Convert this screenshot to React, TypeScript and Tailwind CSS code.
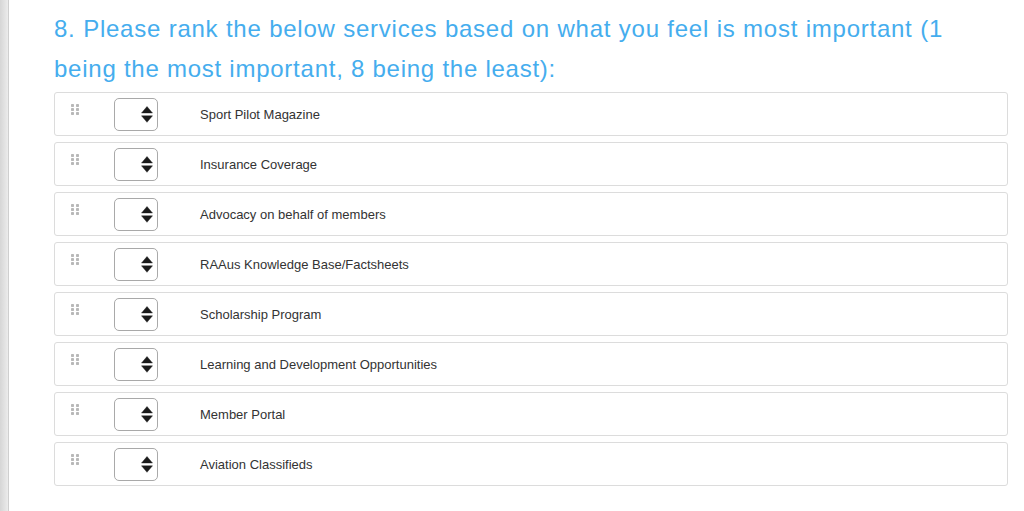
import React from "react";

const items = [
  "Sport Pilot Magazine",
  "Insurance Coverage",
  "Advocacy on behalf of members",
  "RAAus Knowledge Base/Factsheets",
  "Scholarship Program",
  "Learning and Development Opportunities",
  "Member Portal",
  "Aviation Classifieds",
];

function Grip() {
  return (
    <svg width="8" height="11" viewBox="0 0 8 11" className="block">
      {[0, 1].map((c) =>
        [0, 1, 2].map((r) => (
          <rect key={`${c}-${r}`} x={c * 5} y={r * 4} width="3" height="3" rx="0.7" fill="#b8b8b8" />
        ))
      )}
    </svg>
  );
}

function Arrows() {
  return (
    <svg width="12" height="17" viewBox="0 0 12 17" className="block">
      <path d="M6 0.5 L11.5 7 L0.5 7 Z" fill="#1a1a1a" strokeLinejoin="round" stroke="#1a1a1a" strokeWidth="0.4" />
      <path d="M0.5 9.8 L11.5 9.8 L6 16.3 Z" fill="#1a1a1a" strokeLinejoin="round" stroke="#1a1a1a" strokeWidth="0.4" />
    </svg>
  );
}

export default function App() {
  return (
    <div
      className="flex min-h-[511px] w-[1024px] bg-white"
      style={{ fontFamily: '"Liberation Sans", Arial, sans-serif' }}
    >
      <div className="w-[9px] shrink-0 bg-gradient-to-r from-[#d6d6d6] to-[#ececec] border-r border-[#cfcfcf]" />
      <div className="flex-1 pl-[45px] pr-[16px] pt-[9px]">
        <h2 className="m-0 w-[889px] text-justify text-[24px] leading-[40px] tracking-[0.75px] font-normal text-[#45adee]">
          8. Please rank the below services based on what you feel is most important (1 being the most important, 8 being the least):
        </h2>
        <div className="mt-[3px] flex flex-col gap-[6px]">
          {items.map((t) => (
            <div
              key={t}
              className="relative flex h-[44px] items-center rounded-[3px] border border-[#dcdcdc] bg-white"
            >
              <div className="absolute left-[16px] top-[11px]">
                <Grip />
              </div>
              <div className="ml-[59px] flex h-[33px] w-[44px] items-center justify-end rounded-[5px] border border-[#a9a9a9] bg-white pr-[4px]">
                <Arrows />
              </div>
              <span className="ml-[42px] pt-[2px] text-[13px] text-[#333333]">{t}</span>
            </div>
          ))}
        </div>
      </div>
    </div>
  );
}
